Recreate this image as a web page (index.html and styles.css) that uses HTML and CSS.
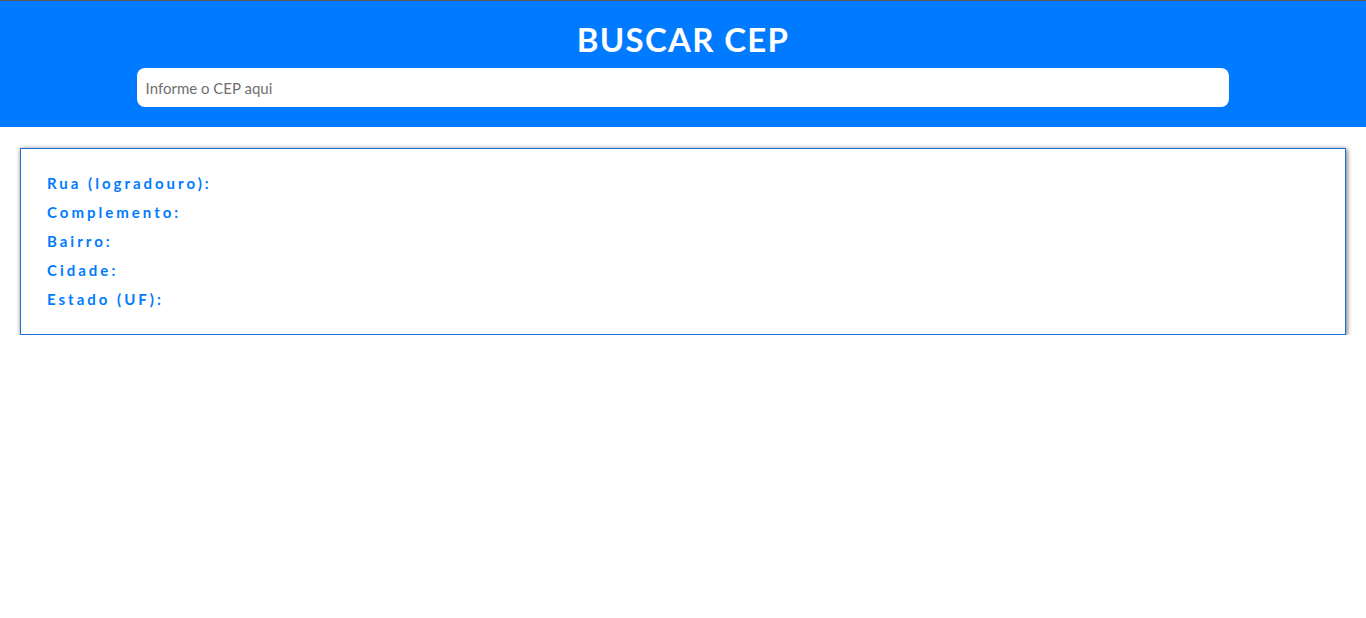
FILE: index.html
```html
<!DOCTYPE html>
<html lang="pt-BR">
<head>
<meta charset="utf-8">
<title>Buscar CEP</title>
<link rel="stylesheet" href="styles.css">
</head>
<body>
<header class="topo">
  <h1 class="titulo">BUSCAR CEP</h1>
  <input class="campo-cep" type="text" placeholder="Informe o CEP aqui">
</header>
<main class="resultado">
  <p class="linha">Rua (logradouro):</p>
  <p class="linha">Complemento:</p>
  <p class="linha">Bairro:</p>
  <p class="linha">Cidade:</p>
  <p class="linha">Estado (UF):</p>
</main>
</body>
</html>
```

FILE: styles.css
```css
html, body {
  margin: 0;
  padding: 0;
  background: #ffffff;
  font-family: "Lato", "Open Sans", sans-serif;
}

body {
  border-top: 1px solid #5a5a5a;
}

.topo {
  background: #007bff;
  height: 126px;
  display: flex;
  flex-direction: column;
  align-items: center;
  box-sizing: border-box;
  padding-top: 18px;
}

.titulo {
  margin: 0;
  color: #ffffff;
  font-size: 33px;
  font-weight: 700;
  line-height: 40px;
  letter-spacing: 1.3px;
}

.campo-cep {
  margin-top: 9px;
  width: 80%;
  height: 39px;
  box-sizing: border-box;
  border: none;
  border-radius: 8px;
  padding: 0 9px;
  font-family: "Lato", "Open Sans", sans-serif;
  font-size: 15px;
  color: #333;
  outline: none;
}

.campo-cep::placeholder {
  color: #6f6f6f;
}

.resultado {
  margin: 21px 20px 0;
  border: 1px solid #1a6fd8;
  box-shadow: 1px 1px 5px rgba(0, 0, 0, 0.6);
  padding: 20px 26px 20px;
  display: flex;
  flex-direction: column;
}

.linha {
  margin: 0;
  color: #007bff;
  font-size: 15px;
  font-weight: 700;
  letter-spacing: 3px;
  line-height: 29px;
}
```
